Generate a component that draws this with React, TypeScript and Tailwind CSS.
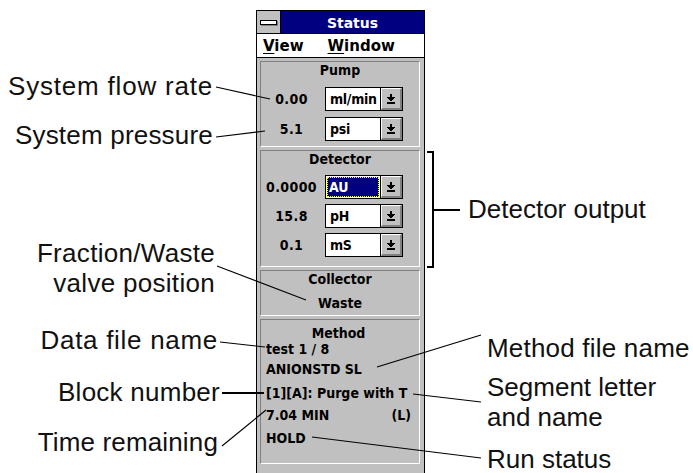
import React from "react";

function Arrow() {
  return (
    <svg width="8" height="10" viewBox="0 0 8 10" shapeRendering="crispEdges" fill="#000">
      <rect x="3" y="0" width="2" height="3" />
      <rect x="0" y="3" width="8" height="1" />
      <rect x="1" y="4" width="6" height="1" />
      <rect x="2" y="5" width="4" height="1" />
      <rect x="3" y="6" width="2" height="1" />
      <rect x="0" y="8" width="8" height="2" />
    </svg>
  );
}

function Combo({ value, selected }: { value: string; selected?: boolean }) {
  return (
    <div className="flex h-[24px] w-[78px] border border-black bg-white">
      <div className="flex flex-1 items-center p-[1px]">
        {selected ? (
          <span className="flex h-full w-full items-center border border-dotted border-[#ffff00] bg-[#000080] pl-[1px] text-white">
            {value}
          </span>
        ) : (
          <span className="pl-[3px] tracking-[-0.3px]">{value}</span>
        )}
      </div>
      <div className="w-[22px] border-l border-black bg-[#c0c0c0]">
        <div className="flex h-full w-full items-center justify-center border-t border-l border-r-2 border-b-2 border-t-white border-l-white border-r-[#808080] border-b-[#808080]">
          <Arrow />
        </div>
      </div>
    </div>
  );
}

function Row({ num, unit, selected, className }: { num: string; unit: string; selected?: boolean; className?: string }) {
  return (
    <div className={"flex h-[24px] items-center " + (className ?? "")}>
      <div className="w-[61px] text-center tracking-[0.4px]">{num}</div>
      <div className="ml-[3px]">
        <Combo value={unit} selected={selected} />
      </div>
    </div>
  );
}

const group =
  "border border-t-[#808080] border-l-[#808080] border-b-white border-r-white flex flex-col";

export default function App() {
  return (
    <div className="relative flex h-[473px] w-[693px] overflow-hidden bg-white text-[#111]">
      {/* Left annotation labels */}
      <div className="flex w-[256px] flex-col items-end font-['Liberation_Sans',Arial,sans-serif] text-[26px] leading-[29px] [font-variant-ligatures:none]">
        <div className="mt-[72px] pr-[43px] tracking-[0.8px]">System flow rate</div>
        <div className="mt-[20px] pr-[43px] tracking-[0.2px]">System pressure</div>
        <div className="mt-[88px] pr-[41px] text-right leading-[30px] tracking-[0.3px]">
          Fraction/Waste
          <br />
          valve position
        </div>
        <div className="mt-[28px] pr-[38px] tracking-[0.7px]">Data file name</div>
        <div className="mt-[23px] pr-[36px] tracking-[0.25px]">Block number</div>
        <div className="mt-[21px] pr-[38px] tracking-[0.15px]">Time remaining</div>
      </div>

      {/* Status window */}
      <div className="mt-[10px] flex h-[480px] w-[169px] flex-col border border-black bg-[#c0c0c0] font-['DejaVu_Sans',sans-serif] text-[14px] font-bold leading-[16px] text-black [font-stretch:condensed]">
        <div className="flex h-[23px] border-b border-black bg-[#000080] [font-stretch:normal]">
          <div className="flex w-[24px] items-center justify-center border-r border-black bg-[#c0c0c0]">
            <div className="h-[5px] w-[17px] border border-black bg-white shadow-[1px_1px_0_#808080]" />
          </div>
          <div className="flex flex-1 items-center justify-center pt-[2px] text-[14px] text-white">Status</div>
        </div>
        <div className="flex h-[24px] items-center border-b border-black bg-white pl-[6px] pt-[1px] text-[15px] [font-stretch:normal]">
          <span>
            <span className="underline underline-offset-2">V</span>iew
          </span>
          <span className="ml-[24px]">
            <span className="underline underline-offset-2">W</span>indow
          </span>
        </div>

        <div className="flex flex-col gap-[3px] pl-[3px] pr-[4px] pt-[3px]">
          {/* Pump */}
          <div className={group + " h-[86px]"}>
            <div className="h-[16px] text-center">Pump</div>
            <Row num="0.00" unit="ml/min" className="mt-[9px]" />
            <Row num="5.1" unit="psi" className="mt-[6px]" />
          </div>

          {/* Detector */}
          <div className={group + " h-[117px]"}>
            <div className="h-[16px] text-center">Detector</div>
            <Row num="0.0000" unit="AU" selected className="mt-[8px]" />
            <Row num="15.8" unit="pH" className="mt-[5px]" />
            <Row num="0.1" unit="mS" className="mt-[5px]" />
          </div>

          {/* Collector */}
          <div className={group + " h-[46px]"}>
            <div className="h-[16px] text-center">Collector</div>
            <div className="mt-[8px] h-[16px] text-center">Waste</div>
          </div>

          {/* Method */}
          <div className={group + " h-[145px] pl-[5px] pr-[8px] pt-[5px]"}>
            <div className="h-[16px] text-center">Method</div>
            <div className="h-[16px]">test 1 / 8</div>
            <div className="mt-[4px] h-[16px]">ANIONSTD SL</div>
            <div className="mt-[8px] h-[16px] whitespace-nowrap">[1][A]: Purge with T</div>
            <div className="mt-[6px] flex h-[16px] justify-between">
              <span>7.04 MIN</span>
              <span>(L)</span>
            </div>
            <div className="mt-[7px] h-[16px]">HOLD</div>
          </div>
        </div>
      </div>

      {/* Right annotation labels */}
      <div className="flex flex-1 flex-col font-['Liberation_Sans',Arial,sans-serif] text-[26px] leading-[29px] [font-variant-ligatures:none]">
        <div className="ml-[43px] mt-[195px]">Detector output</div>
        <div className="ml-[62px] mt-[110px] tracking-[0.2px]">Method file name</div>
        <div className="ml-[62px] mt-[9px] leading-[30px]">
          Segment letter
          <br />
          and name
        </div>
        <div className="ml-[62px] mt-[13px]">Run status</div>
      </div>

      {/* Leader lines overlay */}
      <svg
        className="pointer-events-none absolute left-0 top-0"
        width="693"
        height="473"
        viewBox="0 0 693 473"
        fill="none"
        stroke="#000"
      >
        <line x1="216" y1="87" x2="270" y2="99" strokeWidth="1.1" />
        <line x1="216" y1="137" x2="265" y2="131" strokeWidth="1.1" />
        <line x1="217" y1="266" x2="306" y2="300" strokeWidth="1.1" />
        <line x1="220" y1="342" x2="265" y2="347" strokeWidth="1.1" />
        <line x1="222" y1="393" x2="264" y2="393" strokeWidth="2" />
        <line x1="222" y1="446" x2="266" y2="410" strokeWidth="1.1" />
        <line x1="377" y1="367" x2="481" y2="335" strokeWidth="1.1" />
        <line x1="413" y1="394" x2="481" y2="402" strokeWidth="1.1" />
        <line x1="312" y1="437" x2="481" y2="458" strokeWidth="1.1" />
        <path d="M427 152 H433 V267 H427" strokeWidth="2" />
        <path d="M433 210 H460" strokeWidth="2" />
      </svg>
    </div>
  );
}
